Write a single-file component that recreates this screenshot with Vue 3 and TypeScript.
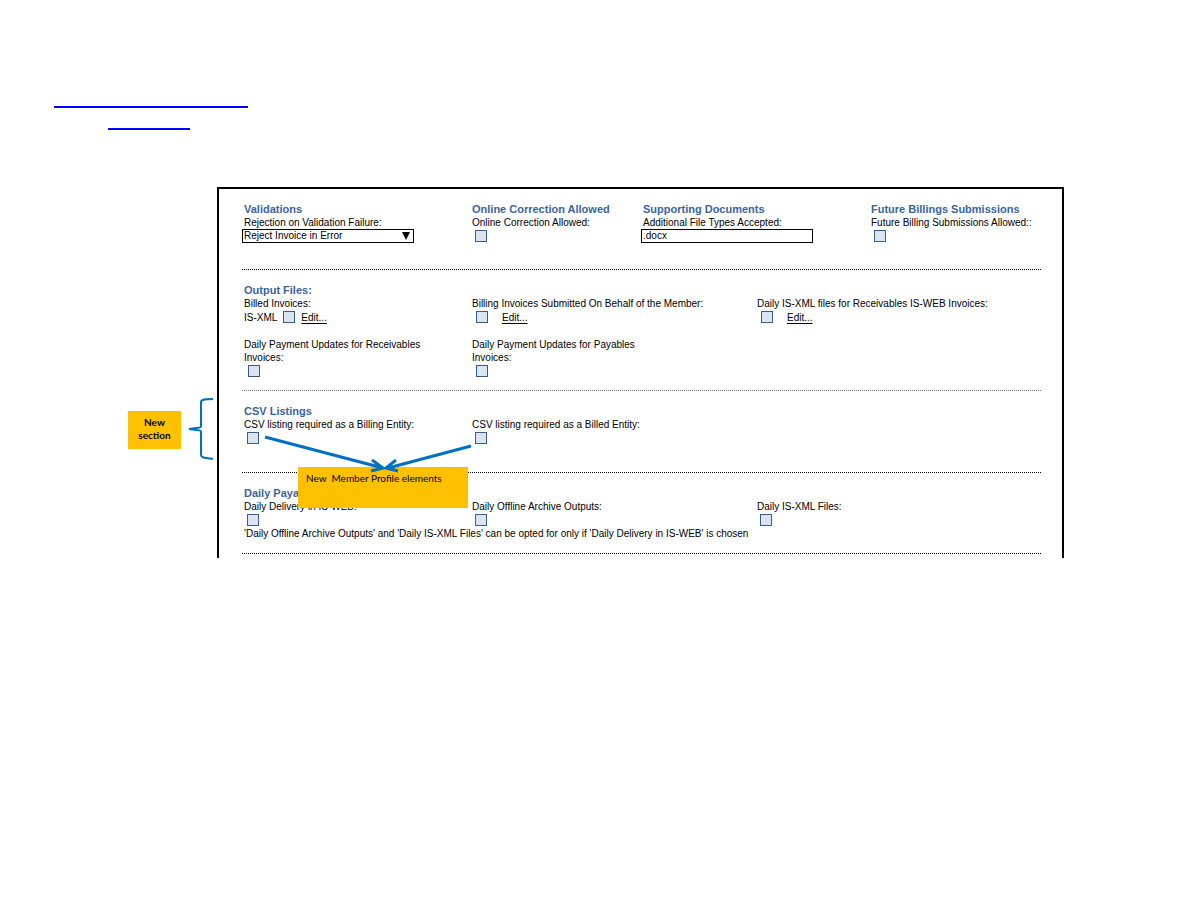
<script setup lang="ts">
import { ref } from 'vue'

const rejection = ref('Reject Invoice in Error')
const fileTypes = ref('.docx')
</script>

<template>
  <main class="page">
    <nav class="links" aria-label="Document links">
      <a class="rule long" href="#" aria-label="Previous section"></a>
      <a class="rule short" href="#" aria-label="Reference"></a>
    </nav>

    <form class="panel" @submit.prevent>
      <section class="section validations">
        <div class="cols four">
          <div class="col">
            <h2>Validations</h2>
            <label for="rejection">Rejection on Validation Failure:</label>
            <div class="select">
              <select id="rejection" v-model="rejection">
                <option>Reject Invoice in Error</option>
              </select>
              <svg class="caret" viewBox="0 0 8 8" aria-hidden="true"><path d="M0 0H8L4 8Z" /></svg>
            </div>
          </div>
          <div class="col">
            <h2>Online Correction Allowed</h2>
            <label for="online">Online Correction Allowed:</label>
            <div class="control"><input id="online" type="checkbox" /></div>
          </div>
          <div class="col">
            <h2>Supporting Documents</h2>
            <label for="types">Additional File Types Accepted:</label>
            <input id="types" v-model="fileTypes" class="text" type="text" />
          </div>
          <div class="col">
            <h2>Future Billings Submissions</h2>
            <label for="future">Future Billing Submissions Allowed::</label>
            <div class="control"><input id="future" type="checkbox" /></div>
          </div>
        </div>
      </section>

      <section class="section outputs">
        <h2>Output Files:</h2>
        <div class="cols three">
          <div class="col">
            <label for="billed">Billed Invoices:</label>
            <div class="control named">
              <label for="billed">IS-XML</label>
              <input id="billed" type="checkbox" />
              <a href="#">Edit...</a>
            </div>
          </div>
          <div class="col">
            <label for="behalf">Billing Invoices Submitted On Behalf of the Member:</label>
            <div class="control linked"><input id="behalf" type="checkbox" /><a href="#">Edit...</a></div>
          </div>
          <div class="col">
            <label for="receivables">Daily IS-XML files for Receivables IS-WEB Invoices:</label>
            <div class="control linked"><input id="receivables" type="checkbox" /><a href="#">Edit...</a></div>
          </div>
          <div class="col">
            <label for="upd-rec">Daily Payment Updates for Receivables<br />Invoices:</label>
            <div class="control"><input id="upd-rec" type="checkbox" /></div>
          </div>
          <div class="col">
            <label for="upd-pay">Daily Payment Updates for Payables<br />Invoices:</label>
            <div class="control"><input id="upd-pay" type="checkbox" /></div>
          </div>
        </div>
      </section>

      <section class="section listings">
        <h2>CSV Listings</h2>
        <div class="cols three">
          <div class="col">
            <label for="csv-billing">CSV listing required as a Billing Entity:</label>
            <div class="control"><input id="csv-billing" type="checkbox" /></div>
          </div>
          <div class="col">
            <label for="csv-billed">CSV listing required as a Billed Entity:</label>
            <div class="control"><input id="csv-billed" type="checkbox" /></div>
          </div>
        </div>

        <aside class="note side">New<br />section</aside>
        <svg class="brace" viewBox="0 0 26 64" aria-hidden="true">
          <path d="M25 2C18 2 13 2 13 5V29Q13 31 8 31L1 32L8 33Q13 33 13 35V58C13 61 18 61 25 62" />
        </svg>
        <aside class="note elements">New&nbsp; Member Profile elements</aside>
        <svg class="arrows" viewBox="0 0 212 40" aria-hidden="true">
          <path d="M3 6L121 37M110 29L121 37L109 40M209 15L126 37M134 29L124 37L136 40" />
        </svg>
      </section>

      <section class="section daily">
        <h2>Daily Payables</h2>
        <div class="cols three">
          <div class="col">
            <label for="web">Daily Delivery in IS-WEB:</label>
            <div class="control"><input id="web" type="checkbox" /></div>
          </div>
          <div class="col">
            <label for="archive">Daily Offline Archive Outputs:</label>
            <div class="control"><input id="archive" type="checkbox" /></div>
          </div>
          <div class="col">
            <label for="xml">Daily IS-XML Files:</label>
            <div class="control"><input id="xml" type="checkbox" /></div>
          </div>
        </div>
        <p>'Daily Offline Archive Outputs' and 'Daily IS-XML Files' can be opted for only if 'Daily Delivery in IS-WEB' is chosen</p>
      </section>
    </form>
  </main>
</template>

<style>
body {
  margin: 0;
  background: #fff;
}
</style>

<style scoped>
.page {
  box-sizing: border-box;
  padding: 86px 124px 40px 54px;
  color: #000;
  font: 10px/13px "Liberation Sans", Arial, sans-serif;
}
.links {
  display: flex;
  flex-direction: column;
}
.rule {
  box-sizing: border-box;
  height: 22px;
  border-bottom: 2px solid #00f;
}
.long { width: 194px; }
.short { width: 82px; margin-left: 54px; }
.panel {
  margin: 57px 0 0 163px;
  padding: 0 21px 4px 23px;
  border: 2px solid #000;
  border-bottom: 0;
}
.section {
  position: relative;
  padding-top: 13px;
  border-bottom: 1px dotted #000;
}
.validations { padding-bottom: 26px; }
.outputs { padding-bottom: 12px; border-color: #777; }
.listings { padding-bottom: 27px; }
.daily { padding-bottom: 13px; }
h2 {
  margin: 0;
  padding-left: 2px;
  color: #3a659b;
  font-size: 11px;
  line-height: 14px;
  white-space: nowrap;
}
.cols { display: grid; row-gap: 14px; }
.four { grid-template-columns: 228fr 171fr 228fr 172fr; }
.three { grid-template-columns: 228fr 285fr 286fr; }
.col { min-width: 0; }
label {
  display: block;
  padding-left: 2px;
  white-space: nowrap;
}
p { margin: 0; padding-left: 2px; }
.control {
  display: flex;
  align-items: center;
  height: 14px;
  padding-left: 5px;
}
.outputs .control { padding-left: 6px; }
.outputs .named { padding-left: 0; gap: 6px; }
.linked { gap: 14px; }
input[type="checkbox"] {
  appearance: none;
  box-sizing: border-box;
  width: 12px;
  height: 12px;
  margin: 0;
  border: 1px solid #385d8a;
  background: #dbe5f1;
}
a { color: #000; }
.control a { text-underline-offset: 2px; }
.select { position: relative; width: 172px; height: 14px; }
select,
.text {
  display: block;
  appearance: none;
  box-sizing: border-box;
  width: 172px;
  height: 14px;
  margin: 0;
  padding: 0 1px;
  border: 1px solid #000;
  border-radius: 0;
  background: #fff;
  color: #000;
  font: inherit;
  line-height: 12px;
}
.text { padding-bottom: 1px; }
.caret {
  position: absolute;
  top: 3px;
  right: 4px;
  width: 8px;
  height: 8px;
  pointer-events: none;
}
.note {
  position: absolute;
  z-index: 1;
  box-sizing: border-box;
  background: #ffc000;
  font-family: Lato, "Open Sans", sans-serif;
}
.side {
  top: 20px;
  left: -114px;
  width: 53px;
  height: 38px;
  padding-top: 5px;
  font-weight: 700;
  text-align: center;
}
.elements {
  top: 76px;
  left: 56px;
  width: 170px;
  height: 41px;
  padding: 5px 8px;
  white-space: nowrap;
}
.brace,
.arrows {
  position: absolute;
  z-index: 2;
  fill: none;
  stroke: #0070c0;
  pointer-events: none;
}
.brace {
  top: 6px;
  left: -54px;
  width: 26px;
  height: 64px;
  stroke-width: 2;
}
.arrows {
  top: 40px;
  left: 20px;
  width: 212px;
  height: 40px;
  overflow: visible;
  stroke-width: 3;
}
</style>
